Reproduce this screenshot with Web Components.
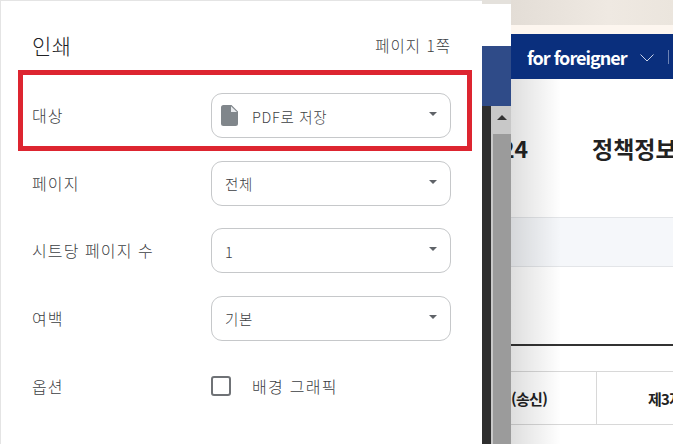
<!DOCTYPE html>
<html lang="ko">
<head>
<meta charset="utf-8">
<title>인쇄</title>
<style>
  html, body { margin: 0; height: 100%; overflow: hidden; background: #fff; }
  body { font-family: "Noto Sans CJK KR", "Noto Sans", sans-serif; }
</style>
</head>
<body>
<print-screen></print-screen>

<script>
// components/print-select.js
class PrintSelect extends HTMLElement {
  constructor() {
    super();
    this.attachShadow({ mode: 'open' });
  }

  connectedCallback() {
    const icon = this.hasAttribute('file-icon') ? `
      <svg class="file" width="17" height="21" viewBox="0 0 17 21">
        <path fill="#80868b" d="M2.5 0H10.500L17 6.500V18.500a2.500 2.500 0 0 1-2.500 2.500H2.500A2.500 2.500 0 0 1 0 18.500V2.500A2.500 2.500 0 0 1 2.500 0z"/>
        <path fill="#e8eaed" d="M10 1.200V7H16z"/>
      </svg>` : '';
    this.shadowRoot.innerHTML = `
      <style>
        :host {
          display: flex;
          align-items: center;
          box-sizing: border-box;
          width: 240px;
          height: 45px;
          padding: 0 13px;
          border: 1px solid #c6c8ca;
          border-radius: 11px;
          background: #fff;
          color: #3c4043;
          font-size: 14.500px;
          font-weight: 300;
        }
        .file { margin: 0 14px 0 -4px; }
        .value { flex: 1; padding-top: 1px; letter-spacing: .7px; }
        .arrow {
          width: 0;
          height: 0;
          margin: 0 0 3px;
          border: 4px solid transparent;
          border-top-color: #5f6368;
          border-bottom: 0;
        }
      </style>
      ${icon}
      <span class="value"><slot></slot></span>
      <span class="arrow"></span>
    `;
  }
}

// components/print-row.js
class PrintRow extends HTMLElement {
  constructor() {
    super();
    this.attachShadow({ mode: 'open' });
    this.shadowRoot.innerHTML = `
      <style>
        :host {
          display: grid;
          grid-template-columns: 179px 240px;
          align-items: center;
          color: #3c4043;
          font-size: 16px;
          font-weight: 300;
        }
        .label { letter-spacing: 1.1px; white-space: nowrap; padding-bottom: 1px; }
      </style>
      <span class="label"><slot name="label"></slot></span>
      <slot></slot>
    `;
  }
}

// components/print-check.js
class PrintCheck extends HTMLElement {
  constructor() {
    super();
    this.attachShadow({ mode: 'open' });
    this.shadowRoot.innerHTML = `
      <style>
        :host {
          display: flex;
          align-items: center;
          gap: 21px;
          color: #3c4043;
          font-size: 16px;
          font-weight: 300;
          letter-spacing: 1.3px;
        }
        .box {
          box-sizing: border-box;
          width: 20px;
          height: 20px;
          border: 2px solid #6f7276;
          border-radius: 3px;
        }
      </style>
      <span class="box"></span>
      <span><slot></slot></span>
    `;
  }
}

// components/print-dialog.js
class PrintDialog extends HTMLElement {
  constructor() {
    super();
    this.attachShadow({ mode: 'open' });
    this.shadowRoot.innerHTML = `
      <style>
        :host {
          display: block;
          box-sizing: border-box;
          height: 444px;
          padding: 1px 0 0 1px;
          background: #e4e4e4;
        }
        .sheet {
          box-sizing: border-box;
          height: 100%;
          padding: 0 31px;
          background: #fff;
        }
        header {
          display: flex;
          justify-content: space-between;
          align-items: center;
          height: 92px;
          padding-bottom: 5px;
          box-sizing: border-box;
          color: #202124;
        }
        h1 { margin: 0; font-size: 21px; font-weight: 300; letter-spacing: .4px; }
        .pages { font-size: 15.500px; font-weight: 300; color: #3c4043; letter-spacing: 1px; }
        .rows { display: flex; flex-direction: column; gap: 22.670px; }
      </style>
      <div class="sheet">
        <header>
          <h1>인쇄</h1>
          <span class="pages">페이지 1쪽</span>
        </header>
        <div class="rows">
          <slot></slot>
        </div>
      </div>
    `;
  }
}

// components/back-page.js  (site visible behind the dialog)
class BackPage extends HTMLElement {
  constructor() {
    super();
    this.attachShadow({ mode: 'open' });
    this.shadowRoot.innerHTML = `
      <style>
        :host {
          display: grid;
          grid-template-columns: 29px 1fr;
          height: 444px;
          overflow: hidden;
          background: #fff;
        }
        .strip { display: grid; grid-template-rows: 4px 42px 60px 1fr; }
        .strip .a { background: #e4e1dc; }
        .strip .b { background: #fff; }
        .strip .c { background: #2f4b88; }
        .strip .d { display: grid; grid-template-columns: 9px 1fr; }
        .dark { background: #2e2e2e; }
        .track { display: grid; grid-template-rows: 28px 1fr; background: #c8c8c8; padding-left: 1px; }
        .up { display: flex; justify-content: center; padding-top: 9px; box-sizing: border-box; }
        .up i { width: 0; height: 0; border: 5px solid transparent; border-bottom-color: #333; border-top: 0; }
        .thumb { background: #9b9b9b; margin-left: 1px; }

        .site { position: relative; overflow: hidden; color: #222; }
        .site::after {
          content: "";
          position: absolute;
          left: 0;
          top: 79px;
          bottom: 0;
          width: 50px;
          background: linear-gradient(90deg, rgba(0,0,0,.13), rgba(0,0,0,0));
        }
        .top { height: 25px; background: linear-gradient(90deg, #e3ddd6, #efe9e2 60%, #ebe5dd); }
        .cream { height: 9px; background: #fdf6ef; }
        nav {
          display: flex;
          align-items: center;
          height: 45px;
          padding-left: 16px;
          box-sizing: border-box;
          background: #0a2f7d;
          color: #fff;
          font-size: 18px;
          font-weight: 700;
          letter-spacing: -1px;
          white-space: nowrap;
        }
        nav svg { margin: 2px 0 0 13px; }
        nav .sep { width: 1px; height: 14px; margin-left: 14px; background: #6c83b5; }
        .title {
          display: flex;
          align-items: center;
          height: 138px;
          box-sizing: border-box;
          font-size: 23px;
          font-weight: 700;
          white-space: nowrap;
          color: #222;
        }
        .title .no { flex: 0 0 81px; text-indent: -10px; }
        .band { height: 50px; box-sizing: border-box; background: #f5f7fa; border: solid #e3e5e8; border-width: 1px 0; }
        .gap { height: 77px; }
        .rule { height: 2px; background: #333; }
        .gap2 { height: 25px; }
        .table {
          display: grid;
          grid-template-columns: 86px 1fr;
          height: 54px;
          box-sizing: border-box;
          border: solid #d8d8d8;
          border-width: 1px 0;
          font-size: 15px;
          font-weight: 700;
          letter-spacing: -.7px;
          white-space: nowrap;
        }
        .table span { display: flex; align-items: center; overflow: hidden; }
        .table span:first-child { border-right: 1px solid #d8d8d8; }
        .table span:last-child { padding-left: 51px; }
      </style>
      <div class="strip">
        <div class="a"></div>
        <div class="b"></div>
        <div class="c"></div>
        <div class="d">
          <div class="dark"></div>
          <div class="track">
            <div class="up"><i></i></div>
            <div class="thumb"></div>
          </div>
        </div>
      </div>
      <div class="site">
        <div class="top"></div>
        <div class="cream"></div>
        <nav>
          <span>for foreigner</span>
          <svg width="14" height="8" viewBox="0 0 14 8"><path d="M.5.500l6.500 6.500L13.500.500" fill="none" stroke="#c9d3e8" stroke-width="1"/></svg>
          <span class="sep"></span>
        </nav>
        <div class="title"><span class="no">24</span><span>정책정보</span></div>
        <div class="band"></div>
        <div class="gap"></div>
        <div class="rule"></div>
        <div class="gap2"></div>
        <div class="table"><span>(송신)</span><span>제3자</span></div>
      </div>
    `;
  }
}

// components/print-screen.js
class PrintScreen extends HTMLElement {
  constructor() {
    super();
    this.attachShadow({ mode: 'open' });
    this.shadowRoot.innerHTML = `
      <style>
        :host {
          display: grid;
          grid-template-columns: 482px 1fr;
          position: relative;
          width: 673px;
          height: 444px;
          overflow: hidden;
        }
        .options { margin-top: 10px; }
        /* annotation drawn over the screenshot */
        .mark {
          position: absolute;
          left: 18px;
          top: 70px;
          width: 454px;
          height: 81px;
          box-sizing: border-box;
          border: 5px solid #dd2530;
        }
      </style>
      <print-dialog>
        <print-row><span slot="label">대상</span><print-select file-icon>PDF로 저장</print-select></print-row>
        <print-row><span slot="label">페이지</span><print-select>전체</print-select></print-row>
        <print-row><span slot="label">시트당 페이지 수</span><print-select>1</print-select></print-row>
        <print-row><span slot="label">여백</span><print-select>기본</print-select></print-row>
        <print-row class="options"><span slot="label">옵션</span><print-check>배경 그래픽</print-check></print-row>
      </print-dialog>
      <back-page></back-page>
      <div class="mark"></div>
    `;
  }
}

customElements.define('print-select', PrintSelect);
customElements.define('print-row', PrintRow);
customElements.define('print-check', PrintCheck);
customElements.define('print-dialog', PrintDialog);
customElements.define('back-page', BackPage);
customElements.define('print-screen', PrintScreen);
</script>
</body>
</html>
